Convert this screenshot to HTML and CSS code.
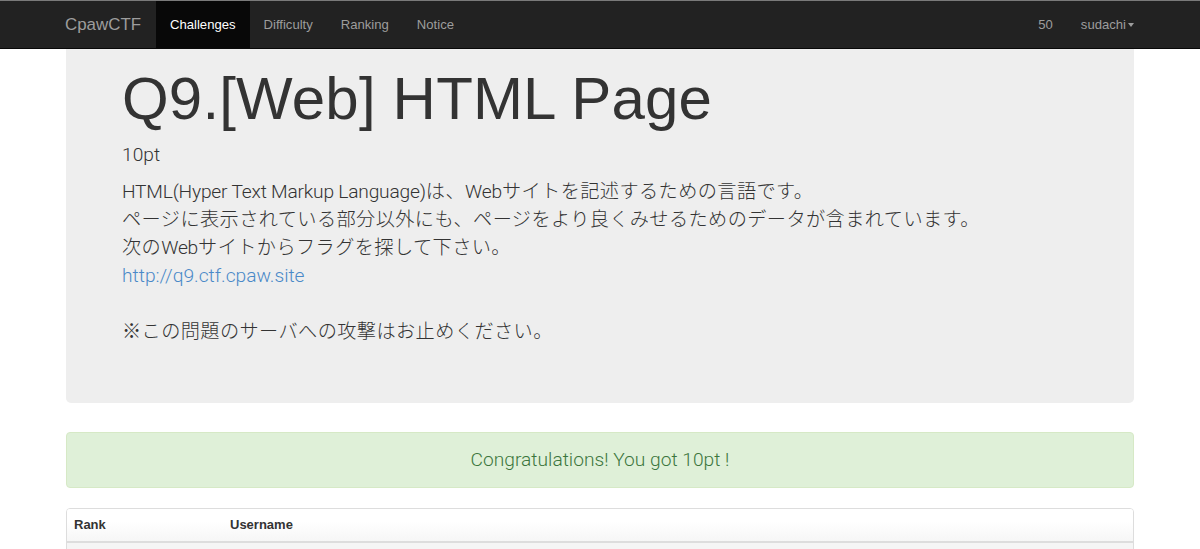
FILE: index.html
```html
<!DOCTYPE html>
<html lang="ja">
<head>
<meta charset="utf-8">
<title>CpawCTF</title>
<link rel="stylesheet" href="styles.css">
</head>
<body>
<nav class="navbar">
  <div class="container nav-inner">
    <div class="nav-left">
      <a class="brand">CpawCTF</a>
      <a class="nav-link active">Challenges</a>
      <a class="nav-link">Difficulty</a>
      <a class="nav-link">Ranking</a>
      <a class="nav-link">Notice</a>
    </div>
    <div class="nav-right">
      <a class="nav-link">50</a>
      <a class="nav-link last">sudachi<span class="caret"></span></a>
    </div>
  </div>
</nav>
<main class="container">
  <section class="jumbotron">
    <h1 class="title">Q9.[Web] HTML Page</h1>
    <p class="points">10pt</p>
    <p class="desc"><span class="en">HTML(Hyper Text Markup Language)</span>は、<span class="en">Web</span>サイトを記述するための言語です。<br>ページに表示されている部分以外にも、ページをより良くみせるためのデータが含まれています。<br>次の<span class="en">Web</span>サイトからフラグを探して下さい。<br><a class="link en">http://q9.ctf.cpaw.site</a><br><br>※この問題のサーバへの攻撃はお止めください。</p>
  </section>
  <div class="alert">Congratulations! You got 10pt !</div>
  <div class="panel">
    <div class="row head">
      <div class="cell rank">Rank</div>
      <div class="cell">Username</div>
    </div>
    <div class="row striped">
      <div class="cell rank">&nbsp;</div>
      <div class="cell">&nbsp;</div>
    </div>
  </div>
</main>
</body>
</html>
```
FILE: styles.css
```css
* { box-sizing: border-box; }
html, body { margin: 0; padding: 0; }
body {
  font-family: "Liberation Sans", Arial, "Noto Sans CJK JP", sans-serif;
  color: #333;
  background: #fff;
  font-size: 13px;
  line-height: 1.42857;
  overflow: hidden;
}
.container { width: 1068px; margin: 0 auto; }

.navbar {
  background: #222;
  border-top: 1px solid #7a7a7a;
  border-bottom: 1px solid #080808;
  height: 49px;
}
.nav-inner {
  display: flex;
  justify-content: space-between;
  height: 47px;
}
.nav-left, .nav-right { display: flex; height: 47px; }
.brand {
  display: flex;
  align-items: center;
  font-size: 16.9px;
  color: #9d9d9d;
  margin-left: -1px;
  padding-right: 15px;
  padding-top: 1px;
}
.nav-link {
  display: flex;
  align-items: center;
  padding: 1px 14px 0;
  color: #9d9d9d;
  font-size: 13.1px;
}
.nav-link.active { background: #080808; color: #fff; }
.nav-link.last { padding-right: 0; }
.caret {
  display: inline-block;
  width: 0; height: 0;
  margin-left: 2px;
  border-top: 4px solid #9d9d9d;
  border-left: 3.5px solid transparent;
  border-right: 3.5px solid transparent;
  vertical-align: middle;
}

.jumbotron {
  background: #eee;
  border-radius: 0 0 5px 5px;
  padding: 17px 56px 44px;
}
.title {
  font-size: 60px;
  font-weight: normal;
  line-height: 66px;
  margin: 0 0 9px;
  color: #333;
  letter-spacing: 0.18px;
}
.points, .desc {
  font-family: Roboto, "Liberation Sans", "Noto Sans CJK JP", sans-serif;
  font-weight: 300;
  font-size: 19.2px;
  line-height: 28px;
  margin: 0 0 9px;
  color: #333;
}
.desc { margin-bottom: 13px; letter-spacing: 0.4px; }
.desc .en { letter-spacing: -0.2px; }
.desc .link { color: #4a89c8; letter-spacing: 0; }

.alert {
  margin-top: 29px;
  background: #dff0d8;
  border: 1px solid #d6e9c6;
  border-radius: 4px;
  color: #3c763d;
  text-align: center;
  font-family: Roboto, "Liberation Sans", sans-serif;
  font-weight: 300;
  font-size: 19.2px;
  line-height: 28px;
  padding: 13px 15px;
}

.panel {
  margin-top: 20px;
  border: 1px solid #ddd;
  border-radius: 4px;
  overflow: hidden;
}
.row { display: flex; }
.row.head {
  background: linear-gradient(to bottom, #fff 0%, #fff 40%, #f6f6f6 100%);
  border-bottom: 2px solid #ddd;
  font-weight: bold;
  font-size: 13px;
}
.row.striped { background: #f5f5f5; }
.cell { padding: 7px 7px; line-height: 18px; }
.cell.rank { width: 156px; }
```
